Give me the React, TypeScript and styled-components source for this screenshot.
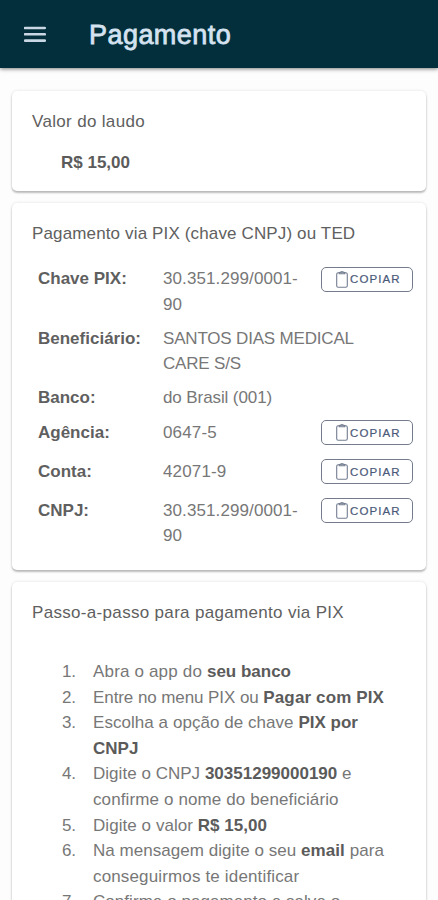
import React from "react";
import styled, { createGlobalStyle } from "styled-components";

const GlobalStyle = createGlobalStyle`
  * { box-sizing: border-box; }
  html, body { margin: 0; padding: 0; }
  body {
    height: 900px;
    overflow: hidden;
    background: #fdfdfd;
    color: #777;
    font-family: "Liberation Sans", Arial, sans-serif;
    font-size: 17px;
    line-height: 25.6px;
  }
`;

const Screen = styled.div`
  height: 900px;
  overflow: hidden;
  display: flex;
  flex-direction: column;
`;

const Toolbar = styled.header`
  flex: none;
  height: 68px;
  padding: 2px 24px 0;
  display: flex;
  align-items: center;
  gap: 43px;
  background: #022f3b;
  box-shadow: 0 1px 4px rgba(0, 0, 0, 0.5);
`;

const MenuButton = styled.button`
  width: 22px;
  height: 18px;
  padding: 0;
  border: 0;
  background: none;
  display: flex;
`;

const Title = styled.h1`
  margin: 0;
  color: #d5e2f0;
  font-size: 27px;
  font-weight: 400;
  line-height: 34px;
  letter-spacing: 0.45px;
  -webkit-text-stroke: 0.8px #d5e2f0;
`;

const Content = styled.main`
  padding: 23px 12px 0;
  display: flex;
  flex-direction: column;
  gap: 12px;
`;

const Card = styled.section<{ $height: number }>`
  flex: none;
  height: ${(p) => p.$height}px;
  padding: 17px 13px 0 20px;
  border-radius: 5px;
  background: #fff;
  box-shadow: 0 2px 2px rgba(0, 0, 0, 0.24), 0 0 3px rgba(0, 0, 0, 0.12);
`;

const CardTitle = styled.h2<{ $spacing: number }>`
  margin: 0;
  color: #606060;
  font-size: 17px;
  font-weight: 400;
  line-height: 28px;
  letter-spacing: ${(p) => p.$spacing}px;
`;

const Amount = styled.p`
  margin: 14px 0 0 29px;
  color: #5b5b5b;
  font-weight: 700;
`;

const Details = styled.dl`
  margin: 18px 0 0 6px;
`;

const DetailRow = styled.div<{ $height: number }>`
  height: ${(p) => p.$height}px;
  display: grid;
  grid-template-columns: 125px 1fr auto;
  align-items: start;
`;

const Label = styled.dt`
  color: #5f5f5f;
  font-weight: 700;
`;

const Value = styled.dd<{ $spacing: number }>`
  margin: 0;
  white-space: pre-line;
  letter-spacing: ${(p) => p.$spacing}px;
`;

const CopyButton = styled.button`
  width: 92px;
  height: 25px;
  margin-top: 0.5px;
  padding: 0 0 0 14px;
  border: 1px solid #747b8c;
  border-radius: 5px;
  background: #fff;
  color: #4a5978;
  font: 400 11.5px "Liberation Sans", Arial, sans-serif;
  letter-spacing: 1.1px;
  -webkit-text-stroke: 0.2px #4a5978;
  display: flex;
  align-items: center;
  gap: 2px;
`;

const Steps = styled.ol`
  margin: 32px 0 0 30px;
  padding: 0;
  list-style: none;
`;

const Step = styled.li`
  display: grid;
  grid-template-columns: 31px 1fr;
`;

const StepNumber = styled.span`
  letter-spacing: -0.2px;
`;

const Line = styled.span<{ $spacing?: number; $bold?: number }>`
  display: block;
  white-space: nowrap;
  letter-spacing: ${(p) => p.$spacing ?? 0}px;

  b {
    color: #5b5b5b;
    letter-spacing: ${(p) => p.$bold ?? 0}px;
  }
`;

const MenuIcon = () => (
  <svg width="22" height="18" viewBox="0 0 22 18" stroke="#c9d7e4" strokeWidth="2.6" strokeLinecap="round">
    <path d="M1 2H20.8M1 8.3H20.8M1 14.6H20.8" />
  </svg>
);

const ClipboardIcon = () => (
  <svg width="12" height="17" viewBox="0 0 12 17" fill="none" stroke="#737d90" strokeWidth="1.1">
    <rect x="0.7" y="1.7" width="10.6" height="14.5" rx="1.5" />
    <path d="M3.2 1.7V2.8h5.6V1.7L7.2 1.1Q6 0.2 4.8 1.1Z" />
  </svg>
);

const details = [
  { label: "Chave PIX:", value: "30.351.299/0001-\n90", spacing: 0.1, copy: true, height: 59.5 },
  { label: "Beneficiário:", value: "SANTOS DIAS MEDICAL\nCARE S/S", spacing: -0.18, copy: false, height: 59.5 },
  { label: "Banco:", value: "do Brasil (001)", spacing: -0.1, copy: false, height: 34.5 },
  { label: "Agência:", value: "0647-5", spacing: 0.15, copy: true, height: 39 },
  { label: "Conta:", value: "42071-9", spacing: 0.15, copy: true, height: 39 },
  { label: "CNPJ:", value: "30.351.299/0001-\n90", spacing: 0.1, copy: true, height: 52 },
];

const steps: React.ReactNode[] = [
  <Line $spacing={0.17}>Abra o app do <b>seu banco</b></Line>,
  <Line $spacing={-0.08} $bold={0.13}>Entre no menu PIX ou <b>Pagar com PIX</b></Line>,
  <>
    <Line $spacing={0.05}>Escolha a opção de chave <b>PIX por</b></Line>
    <Line><b>CNPJ</b></Line>
  </>,
  <>
    <Line $spacing={0.03}>Digite o CNPJ <b>30351299000190</b> e</Line>
    <Line $spacing={0.12}>confirme o nome do beneficiário</Line>
  </>,
  <Line $spacing={0.06}>Digite o valor <b>R$ 15,00</b></Line>,
  <>
    <Line $spacing={0.04} $bold={0.1}>Na mensagem digite o seu <b>email</b> para</Line>
    <Line $spacing={0.15}>conseguirmos te identificar</Line>
  </>,
  <Line $spacing={0.05}>Confirme o pagamento e salve o</Line>,
];

export default function App() {
  return (
    <Screen>
      <GlobalStyle />
      <Toolbar>
        <MenuButton aria-label="Menu"><MenuIcon /></MenuButton>
        <Title>Pagamento</Title>
      </Toolbar>
      <Content>
        <Card $height={100}>
          <CardTitle $spacing={0.33}>Valor do laudo</CardTitle>
          <Amount>R$ 15,00</Amount>
        </Card>
        <Card $height={367}>
          <CardTitle $spacing={0.14}>Pagamento via PIX (chave CNPJ) ou TED</CardTitle>
          <Details>
            {details.map((d) => (
              <DetailRow key={d.label} $height={d.height}>
                <Label>{d.label}</Label>
                <Value $spacing={d.spacing}>{d.value}</Value>
                {d.copy && <CopyButton><ClipboardIcon />COPIAR</CopyButton>}
              </DetailRow>
            ))}
          </Details>
        </Card>
        <Card $height={420}>
          <CardTitle $spacing={0.32}>Passo-a-passo para pagamento via PIX</CardTitle>
          <Steps>
            {steps.map((step, i) => (
              <Step key={i}>
                <StepNumber>{i + 1}.</StepNumber>
                <div>{step}</div>
              </Step>
            ))}
          </Steps>
        </Card>
      </Content>
    </Screen>
  );
}
